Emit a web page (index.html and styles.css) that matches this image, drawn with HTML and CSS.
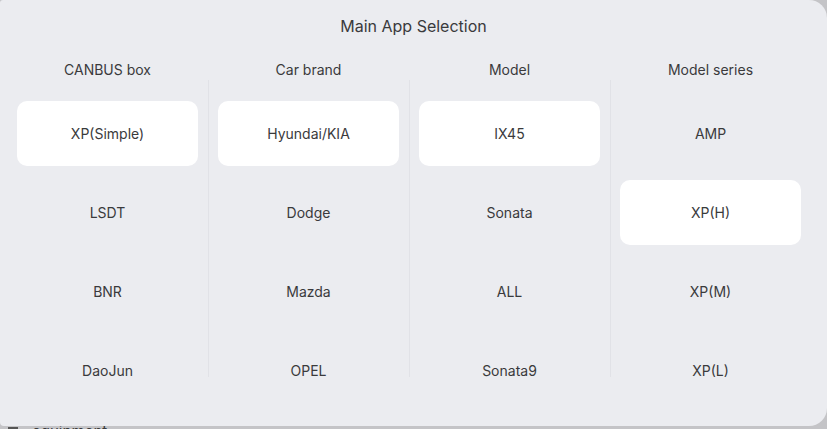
FILE: index.html
```html
<!DOCTYPE html>
<html>
<head>
<meta charset="utf-8">
<link rel="stylesheet" href="styles.css">
</head>
<body>
<div class="page">
  <div class="page-row"><span class="page-icon"></span><span class="page-text">equipment</span></div>
</div>
<div class="dialog">
  <div class="title">Main App Selection</div>
  <div class="columns">
    <div class="col">
      <div class="head">CANBUS box</div>
      <div class="item selected">XP(Simple)</div>
      <div class="item">LSDT</div>
      <div class="item">BNR</div>
      <div class="item">DaoJun</div>
    </div>
    <div class="col divided">
      <div class="head">Car brand</div>
      <div class="item selected">Hyundai/KIA</div>
      <div class="item">Dodge</div>
      <div class="item">Mazda</div>
      <div class="item">OPEL</div>
    </div>
    <div class="col divided">
      <div class="head">Model</div>
      <div class="item selected">IX45</div>
      <div class="item">Sonata</div>
      <div class="item">ALL</div>
      <div class="item">Sonata9</div>
    </div>
    <div class="col divided">
      <div class="head">Model series</div>
      <div class="item">AMP</div>
      <div class="item selected">XP(H)</div>
      <div class="item">XP(M)</div>
      <div class="item">XP(L)</div>
    </div>
  </div>
</div>
</body>
</html>
```
FILE: styles.css
```css
html, body {
  margin: 0;
  padding: 0;
  width: 827px;
  height: 429px;
  overflow: hidden;
  background: #c4c4c7;
  font-family: Inter, Roboto, "Liberation Sans", sans-serif;
  color: #3a3a3c;
}
.page {
  padding: 423px 0 0 8px;
}
.page-row {
  display: flex;
  align-items: flex-start;
  gap: 14px;
  font-size: 15px;
  line-height: 18px;
}
.page-icon {
  margin-top: 4px;
  width: 10px;
  height: 10px;
  border-top: 2px solid #555;
}
.dialog {
  position: absolute;
  left: 0;
  top: 0;
  width: 827px;
  height: 426px;
  background: #ebecf0;
  border-radius: 3px 18px 18px 4px;
  box-sizing: border-box;
  padding-left: 7px;
}
.title {
  height: 52px;
  line-height: 52px;
  text-align: center;
  font-size: 16px;
  padding-right: 7px;
}
.columns {
  display: flex;
}
.col {
  width: 201px;
  position: relative;
  display: flex;
  flex-direction: column;
}
.col.divided::before {
  content: "";
  position: absolute;
  left: 0;
  top: 28px;
  height: 297px;
  width: 1px;
  background: #e1e2e7;
}
.head {
  height: 36px;
  line-height: 36px;
  text-align: center;
  font-size: 14px;
  margin-bottom: 6px;
}
.item {
  height: 65px;
  margin: 7px 10px;
  border-radius: 10px;
  display: flex;
  align-items: center;
  justify-content: center;
  font-size: 14px;
}
.item.selected {
  background: #fff;
}
```
